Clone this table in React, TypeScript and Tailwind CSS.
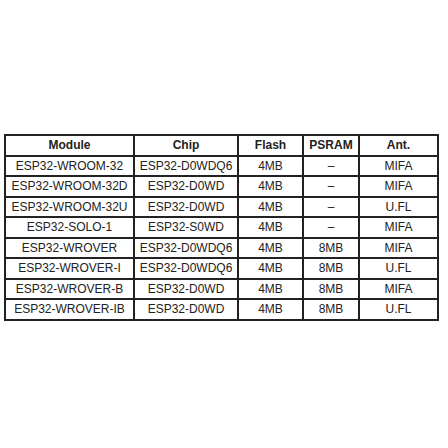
import React from "react";

const rows = [
  ["ESP32-WROOM-32", "ESP32-D0WDQ6", "4MB", "–", "MIFA"],
  ["ESP32-WROOM-32D", "ESP32-D0WD", "4MB", "–", "MIFA"],
  ["ESP32-WROOM-32U", "ESP32-D0WD", "4MB", "–", "U.FL"],
  ["ESP32-SOLO-1", "ESP32-S0WD", "4MB", "–", "MIFA"],
  ["ESP32-WROVER", "ESP32-D0WDQ6", "4MB", "8MB", "MIFA"],
  ["ESP32-WROVER-I", "ESP32-D0WDQ6", "4MB", "8MB", "U.FL"],
  ["ESP32-WROVER-B", "ESP32-D0WD", "4MB", "8MB", "MIFA"],
  ["ESP32-WROVER-IB", "ESP32-D0WD", "4MB", "8MB", "U.FL"],
];

const headers = ["Module", "Chip", "Flash", "PSRAM", "Ant."];
const widths = ["w-[129px]", "w-[104px]", "w-[65px]", "w-[56px]", "w-[79px]"];

function Row({ cells, bold }: { cells: string[]; bold?: boolean }) {
  return (
    <div className="flex border-b-2 border-[#222]">
      {cells.map((c, j) => (
        <div
          key={j}
          className={`${widths[j]} shrink-0 border-r-2 border-[#222] text-center py-[2px] leading-[14.5px] ${
            bold ? "font-bold" : "font-normal"
          }`}
        >
          {c}
        </div>
      ))}
    </div>
  );
}

export default function App() {
  return (
    <div
      className="w-[448px] h-[448px] bg-white flex flex-col pt-[134px] pl-[4px] text-[#222]"
      style={{ fontFamily: '"Liberation Sans", Arial, sans-serif' }}
    >
      <div className="flex flex-col w-[435px] border-l-2 border-t-2 border-[#222] text-[12px]">
        <Row cells={headers} bold />
        {rows.map((r, i) => (
          <Row key={i} cells={r} />
        ))}
      </div>
    </div>
  );
}
